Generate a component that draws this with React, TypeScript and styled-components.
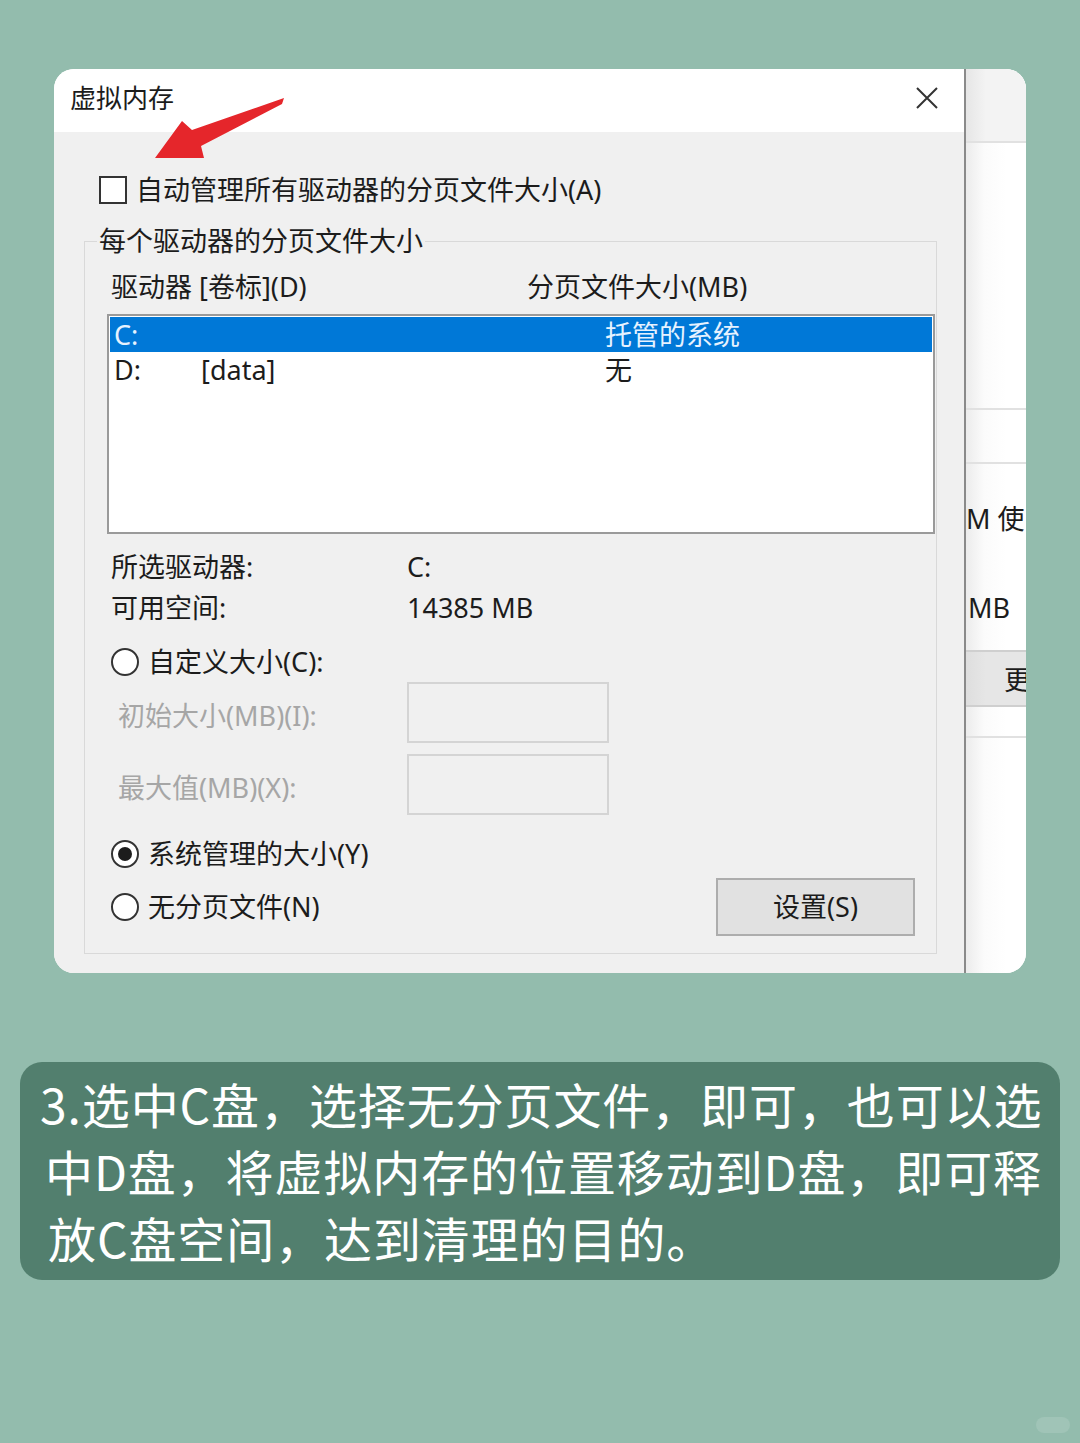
import styled, { createGlobalStyle } from "styled-components";

const GlobalStyle = createGlobalStyle`
    html, body {
        margin: 0;
        padding: 0;
        background: #93bcad;
    }
    body {
        font-family: "Noto Sans", "Noto Sans CJK SC", sans-serif;
    }
`;

const Page = styled.div`
    width: 1080px;
    height: 1443px;
    background: #93bcad;
    padding-top: 69px;
    box-sizing: border-box;
    position: relative;
`;

const Card = styled.div`
    position: relative;
    margin-left: 54px;
    width: 972px;
    height: 904px;
    border-radius: 20px;
    overflow: hidden;
    display: flex;
    background: #fff;
`;

const Dialog = styled.div`
    width: 910px;
    display: flex;
    flex-direction: column;
    font-family: "Noto Sans", "Noto Sans CJK SC", sans-serif;
    font-size: 27px;
    line-height: 34px;
    color: #1c1c1c;
`;

const TitleBar = styled.div`
    height: 63px;
    box-sizing: border-box;
    padding: 0 26px 6px 16px;
    background: #fff;
    display: flex;
    align-items: center;
    justify-content: space-between;
    font-size: 26px;
`;

const Body = styled.div`
    flex: 1;
    background: #f0f0f0;
    padding-top: 44px;
    display: flex;
    flex-direction: column;
`;

const CheckRow = styled.div`
    display: flex;
    align-items: center;
    gap: 9px;
    margin-left: 45px;
    height: 28px;
`;

const CheckBox = styled.span`
    width: 24px;
    height: 24px;
    border: 2px solid #333;
    background: #fff;
    display: inline-block;
`;

const Group = styled.fieldset`
    margin: 20px 27px 0 30px;
    padding: 0 0 17px 0;
    border: 1px solid #d9d9d9;
    min-width: 0;
`;

const Legend = styled.legend`
    margin-left: 12px;
    padding: 0 2px;
    line-height: 34px;
`;

const HeaderRow = styled.div`
    height: 56px;
    padding-top: 12px;
    box-sizing: border-box;
    display: grid;
    grid-template-columns: 416px 1fr;
    padding-left: 26px;
`;

const ListBox = styled.div`
    margin: 0 1px 0 22px;
    height: 220px;
    box-sizing: border-box;
    border: 2px solid #9a9a9a;
    background: #fff;
    padding: 1px;
`;

const ListRow = styled.div<{ $selected?: boolean }>`
    height: 35px;
    display: grid;
    grid-template-columns: 87px 404px 1fr;
    align-items: center;
    padding-left: 4px;
    background: ${({ $selected }) => ($selected ? "#0078d7" : "transparent")};
    color: ${({ $selected }) => ($selected ? "#e6f2ff" : "#1c1c1c")};
`;

const InfoGrid = styled.div`
    margin-top: 12px;
    padding-left: 26px;
    display: grid;
    grid-template-columns: 296px 1fr;
    grid-auto-rows: 41px;
    align-items: center;
`;

const RadioRow = styled.div<{ $top: number; $height: number }>`
    margin-top: ${({ $top }) => $top}px;
    height: ${({ $height }) => $height}px;
    padding-left: 26px;
    display: flex;
    align-items: center;
    gap: 9px;
`;

const Radio = styled.span<{ $checked?: boolean }>`
    width: 24px;
    height: 24px;
    border-radius: 50%;
    border: 2px solid #333;
    background: #fff;
    display: inline-flex;
    align-items: center;
    justify-content: center;

    &::after {
        content: "";
        width: 14px;
        height: 14px;
        border-radius: 50%;
        background: #1c1c1c;
        display: ${({ $checked }) => ($checked ? "block" : "none")};
    }
`;

const FieldRow = styled.div<{ $top: number }>`
    margin-top: ${({ $top }) => $top}px;
    display: grid;
    grid-template-columns: 289px 202px;
    padding-left: 33px;
    align-items: center;
`;

const DisabledLabel = styled.span`
    color: #a6a6a6;
    margin-top: 6px;
`;

const TextBox = styled.div`
    height: 61px;
    box-sizing: border-box;
    border: 2px solid #d4d4d4;
    background: #f0f0f0;
`;

const LastRow = styled.div`
    margin-top: 5px;
    height: 58px;
    display: flex;
    align-items: center;
    justify-content: space-between;
    padding: 0 21px 0 26px;
`;

const RadioLabel = styled.div`
    display: flex;
    align-items: center;
    gap: 9px;
`;

const Button = styled.div`
    width: 199px;
    height: 58px;
    box-sizing: border-box;
    border: 2px solid #adadad;
    background: #e1e1e1;
    display: flex;
    align-items: center;
    justify-content: center;
`;

const Divider = styled.div`
    width: 2px;
    background: #8a8a8a;
`;

const Side = styled.div`
    flex: 1;
    display: flex;
    flex-direction: column;
    overflow: hidden;
    white-space: nowrap;
    font-family: "Noto Sans", "Noto Sans CJK SC", sans-serif;
    font-size: 27px;
    color: #1c1c1c;
    background: linear-gradient(to right, #ececec, #fbfbfb 18px, #fff 40px);
`;

const SideBlock = styled.div<{ $h: number; $line?: boolean; $bg?: string; $pad?: number }>`
    height: ${({ $h }) => $h}px;
    flex-shrink: 0;
    box-sizing: border-box;
    padding-left: ${({ $pad }) => $pad ?? 0}px;
    border-bottom: ${({ $line }) => ($line ? "2px solid #e1e1e1" : "none")};
    background: ${({ $bg }) => $bg ?? "transparent"};
    display: flex;
    align-items: center;
`;

const SideButton = styled.div`
    height: 57px;
    flex-shrink: 0;
    box-sizing: border-box;
    border-top: 2px solid #cfcfcf;
    border-bottom: 2px solid #cfcfcf;
    background: linear-gradient(to right, #dedede, #e6e6e6 20px);
    display: flex;
    align-items: center;
    padding-left: 38px;
`;

const ArrowSvg = styled.svg`
    position: absolute;
    left: 90px;
    top: 25px;
`;

const Note = styled.div`
    margin: 89px 20px 0 20px;
    background: #527f6e;
    border-radius: 22px;
    padding: 8px 0 9px 20px;
    color: #fff;
    font-family: "Noto Sans CJK SC", sans-serif;
    font-size: 48px;
    line-height: 67px;
    letter-spacing: 0.9px;
`;

const NoteLine = styled.div<{ $indent?: number }>`
    white-space: nowrap;
    padding-left: ${({ $indent }) => $indent ?? 0}px;
`;

const Watermark = styled.div`
    position: absolute;
    right: 10px;
    bottom: 10px;
    width: 34px;
    height: 16px;
    border-radius: 8px;
    background: rgba(255, 255, 255, 0.12);
`;

function CloseIcon() {
    return (
        <svg width="22" height="22" viewBox="0 0 22 22">
            <path d="M1 1 L21 21 M21 1 L1 21" stroke="#333" strokeWidth="2" fill="none" />
        </svg>
    );
}

function RedArrow() {
    return (
        <ArrowSvg width="150" height="70" viewBox="0 0 150 70">
            <polygon
                points="11,64 38,27 48,36 140,4 138,10 57,52 60,64"
                fill="#e5262b"
            />
        </ArrowSvg>
    );
}

export default function App() {
    return (
        <Page>
            <GlobalStyle />
            <Card>
                <Dialog>
                    <TitleBar>
                        <span>虚拟内存</span>
                        <CloseIcon />
                    </TitleBar>
                    <Body>
                        <CheckRow>
                            <CheckBox />
                            <span>自动管理所有驱动器的分页文件大小(A)</span>
                        </CheckRow>
                        <Group>
                            <Legend>每个驱动器的分页文件大小</Legend>
                            <HeaderRow>
                                <span>驱动器 [卷标](D)</span>
                                <span>分页文件大小(MB)</span>
                            </HeaderRow>
                            <ListBox>
                                <ListRow $selected>
                                    <span>C:</span>
                                    <span></span>
                                    <span>托管的系统</span>
                                </ListRow>
                                <ListRow>
                                    <span>D:</span>
                                    <span>[data]</span>
                                    <span>无</span>
                                </ListRow>
                            </ListBox>
                            <InfoGrid>
                                <span>所选驱动器:</span>
                                <span>C:</span>
                                <span>可用空间:</span>
                                <span>14385 MB</span>
                            </InfoGrid>
                            <RadioRow $top={15} $height={38}>
                                <Radio />
                                <span>自定义大小(C):</span>
                            </RadioRow>
                            <FieldRow $top={1}>
                                <DisabledLabel>初始大小(MB)(I):</DisabledLabel>
                                <TextBox />
                            </FieldRow>
                            <FieldRow $top={11}>
                                <DisabledLabel>最大值(MB)(X):</DisabledLabel>
                                <TextBox />
                            </FieldRow>
                            <RadioRow $top={20} $height={38}>
                                <Radio $checked />
                                <span>系统管理的大小(Y)</span>
                            </RadioRow>
                            <LastRow>
                                <RadioLabel>
                                    <Radio />
                                    <span>无分页文件(N)</span>
                                </RadioLabel>
                                <Button>设置(S)</Button>
                            </LastRow>
                        </Group>
                    </Body>
                </Dialog>
                <Divider />
                <Side>
                    <SideBlock $h={74} $line $bg="linear-gradient(to right, #e6e6e6, #f3f3f3 20px)" />
                    <SideBlock $h={267} $line />
                    <SideBlock $h={54} $line />
                    <SideBlock $h={106}>M 使</SideBlock>
                    <SideBlock $h={74} $pad={2}>MB</SideBlock>
                    <SideBlock $h={6} />
                    <SideButton>更</SideButton>
                    <SideBlock $h={31} $line />
                </Side>
                <RedArrow />
            </Card>
            <Note>
                <NoteLine>3.选中C盘，选择无分页文件，即可，也可以选</NoteLine>
                <NoteLine $indent={5}>中D盘，将虚拟内存的位置移动到D盘，即可释</NoteLine>
                <NoteLine $indent={8}>放C盘空间，达到清理的目的。</NoteLine>
            </Note>
            <Watermark />
        </Page>
    );
}
